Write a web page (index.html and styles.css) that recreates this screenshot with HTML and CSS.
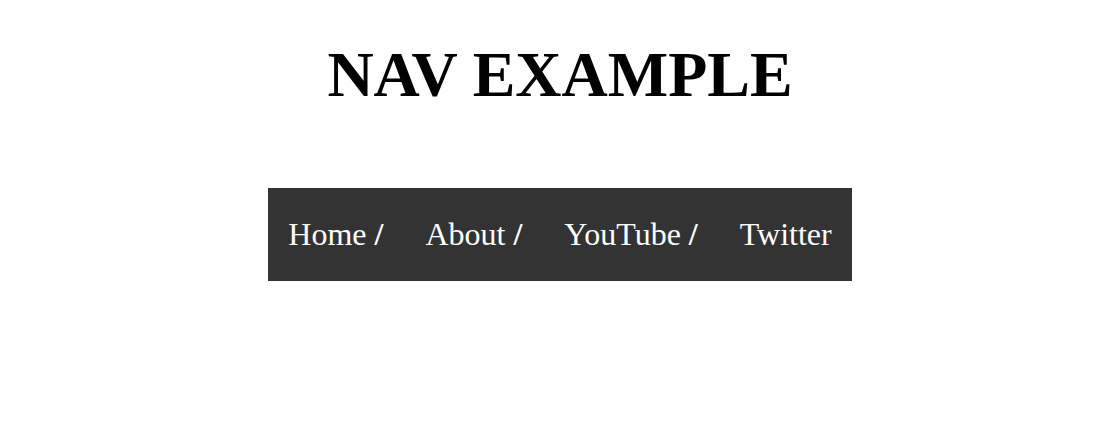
FILE: index.html
```html
<!DOCTYPE html>
<html>
<head>
<meta charset="utf-8">
<link rel="stylesheet" href="styles.css">
</head>
<body>
<h1 class="title">NAV EXAMPLE</h1>
<nav class="nav-wrap">
  <ul class="nav">
    <li class="nav-item"><a href="#">Home</a> <span class="sep">/</span></li>
    <li class="nav-item"><a href="#">About</a> <span class="sep">/</span></li>
    <li class="nav-item"><a href="#">YouTube</a> <span class="sep">/</span></li>
    <li class="nav-item"><a href="#">Twitter</a></li>
  </ul>
</nav>
</body>
</html>
```
FILE: styles.css
```css
html, body {
  background: #fff;
}
body {
  margin: 0;
  padding: 0 0 0 12px;
  font-family: "Liberation Serif", "Times New Roman", serif;
  color: #000;
}
.title {
  margin: 38px 0 0;
  font-size: 64px;
  font-weight: bold;
  text-align: center;
  line-height: normal;
}
.nav-wrap {
  display: flex;
  justify-content: center;
  margin-top: 76px;
}
.nav {
  display: flex;
  gap: 2px;
  list-style: none;
  margin: 0;
  padding: 28px 0;
  background: #333;
}
.nav-item {
  padding: 0 20px;
  font-size: 32px;
  line-height: normal;
  color: #fff;
}
.nav-item a {
  color: #fff;
  text-decoration: none;
}
.sep {
  font-weight: bold;
}
```
